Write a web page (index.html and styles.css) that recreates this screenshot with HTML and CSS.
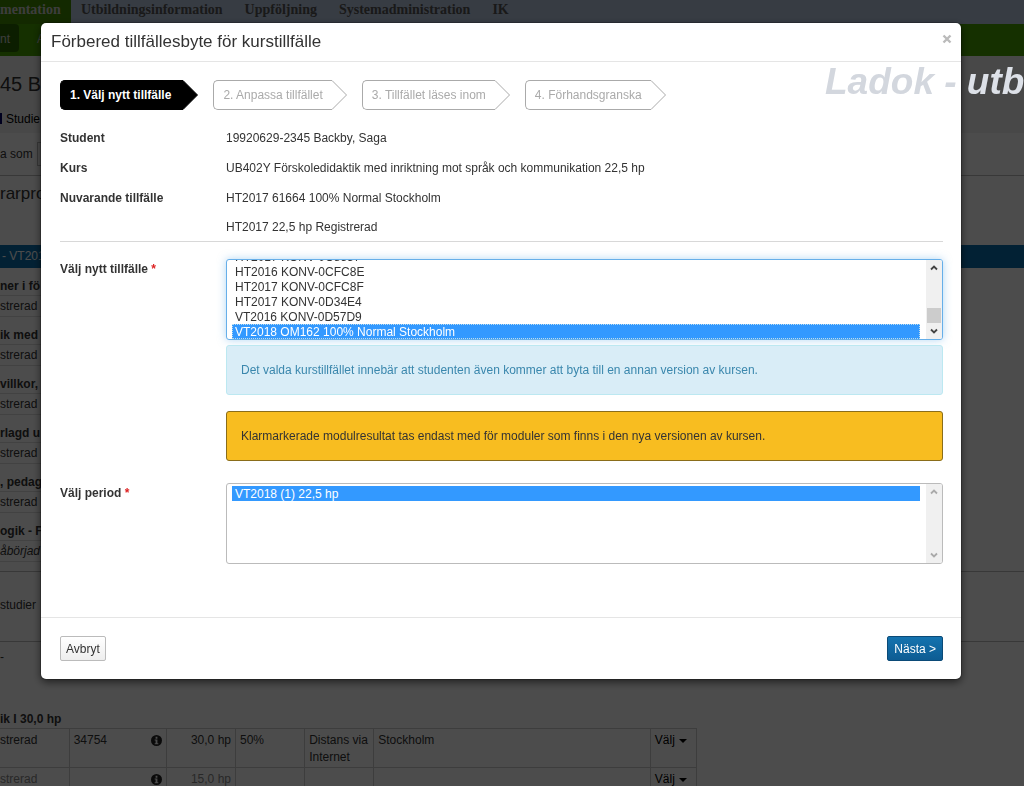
FILE: index.html
```html
<!DOCTYPE html>
<html lang="sv">
<head>
<meta charset="utf-8">
<title>Förbered tillfällesbyte för kurstillfälle</title>
<link rel="stylesheet" href="styles.css">
</head>
<body>
<div class="page">
  <nav class="topnav">
    <a class="active" href="#">mentation</a>
    <a href="#">Utbildningsinformation</a>
    <a href="#">Uppföljning</a>
    <a href="#">Systemadministration</a>
    <a href="#">IK</a>
  </nav>
  <nav class="subnav"><a class="active" href="#">nt</a><a href="#">A</a></nav>
  <div class="head">
    <h1 class="student">45 Ba</h1>
    <div class="tabs"><span class="mark"></span>Studie</div>
  </div>
  <div class="filter"><label for="show">a som</label><select id="show"><option></option></select></div>
  <h2 class="program">rarpro</h2>
  <div class="band">- VT201</div>
  <section class="courses">
    <h3>ner i fö</h3><p>strerad</p>
    <h3>ik med</h3><p>strerad</p>
    <h3>villkor, o</h3><p>strerad</p>
    <h3>rlagd u</h3><p>strerad</p>
    <h3>, pedag</h3><p>strerad</p>
    <h3>ogik - Fö</h3><p><i>åbörjad</i></p>
  </section>
  <div class="studies">studier</div>
  <div class="dash">-</div>
  <h3 class="course-title">ik I 30,0 hp</h3>
  <table class="results">
    <colgroup><col class="c1"><col class="c2"><col class="c3"><col class="c3"><col class="c3"><col class="c4"><col class="c5"></colgroup>
    <tr>
      <td>strerad</td>
      <td><div class="code">34754<svg class="info" viewBox="0 0 12 12"><circle cx="6" cy="6" r="6"/><path d="M5 2h2v2H5zM4 5h3v4h1v1H4V9h1V6H4z"/></svg></div></td>
      <td class="num">30,0 hp</td><td>50%</td><td>Distans via Internet</td><td>Stockholm</td>
      <td><a href="#">Välj <span class="caret"></span></a></td>
    </tr>
    <tr class="muted">
      <td>strerad</td>
      <td><div class="code"><span></span><svg class="info" viewBox="0 0 12 12"><circle cx="6" cy="6" r="6"/><path d="M5 2h2v2H5zM4 5h3v4h1v1H4V9h1V6H4z"/></svg></div></td>
      <td class="num">15,0 hp</td><td></td><td></td><td></td>
      <td><a href="#">Välj <span class="caret"></span></a></td>
    </tr>
  </table>
</div>
<div class="backdrop"></div>

<div class="modal" role="dialog" aria-labelledby="title">
  <header class="modal-header">
    <h2 id="title">Förbered tillfällesbyte för kurstillfälle</h2>
    <button class="close" type="button" aria-label="Stäng"><svg viewBox="0 0 10 10"><path d="M1.5 1.5l7 7M8.5 1.5l-7 7"/></svg></button>
  </header>
  <form class="modal-body">
    <ol class="steps">
      <li class="current"><span>1. Välj nytt tillfälle</span><svg viewBox="0 0 15 30"><path d="M0 .5L14.5 15 0 29.5"/></svg></li>
      <li><span>2. Anpassa tillfället</span><svg viewBox="0 0 15 30"><path d="M0 .5L14.5 15 0 29.5"/></svg></li>
      <li><span>3. Tillfället läses inom</span><svg viewBox="0 0 15 30"><path d="M0 .5L14.5 15 0 29.5"/></svg></li>
      <li><span>4. Förhandsgranska</span><svg viewBox="0 0 15 30"><path d="M0 .5L14.5 15 0 29.5"/></svg></li>
    </ol>
    <dl class="facts">
      <dt>Student</dt><dd>19920629-2345 Backby, Saga</dd>
      <dt>Kurs</dt><dd>UB402Y Förskoledidaktik med inriktning mot språk och kommunikation 22,5 hp</dd>
      <dt>Nuvarande tillfälle</dt><dd>HT2017 61664 100% Normal Stockholm</dd>
      <dd class="second">HT2017 22,5 hp Registrerad</dd>
    </dl>
    <div class="field">
      <label for="occasion">Välj nytt tillfälle <b>*</b></label>
      <div class="stack">
        <div class="listbox focused">
          <select id="occasion" size="5">
            <option>HT2017 KONV-0C8557</option>
            <option>HT2016 KONV-0CFC8E</option>
            <option>HT2017 KONV-0CFC8F</option>
            <option>HT2017 KONV-0D34E4</option>
            <option>VT2016 KONV-0D57D9</option>
            <option selected>VT2018 OM162 100% Normal Stockholm</option>
          </select>
          <div class="bar"><svg viewBox="0 0 8 6"><path d="M1 4.5l3-3 3 3"/></svg><span class="thumb"></span><svg viewBox="0 0 8 6"><path d="M1 1.5l3 3 3-3"/></svg></div>
        </div>
        <p class="note">Det valda kurstillfället innebär att studenten även kommer att byta till en annan version av kursen.</p>
        <p class="note warning">Klarmarkerade modulresultat tas endast med för moduler som finns i den nya versionen av kursen.</p>
      </div>
    </div>
    <div class="field">
      <label for="period">Välj period <b>*</b></label>
      <div class="listbox">
        <select id="period" size="5"><option selected>VT2018 (1) 22,5 hp</option></select>
        <div class="bar"><svg viewBox="0 0 8 6"><path d="M1 4.5l3-3 3 3"/></svg><svg viewBox="0 0 8 6"><path d="M1 1.5l3 3 3-3"/></svg></div>
      </div>
    </div>
  </form>
  <footer class="modal-footer">
    <button class="btn" type="button">Avbryt</button>
    <button class="btn primary" type="button">Nästa &gt;</button>
  </footer>
</div>
<div class="watermark">Ladok - <span>utb</span></div>
<script src="script.js"></script>
</body>
</html>
```
FILE: script.js
```js
const list = document.getElementById('occasion');
list.scrollTop = list.scrollHeight;
```
FILE: styles.css
```css
* { box-sizing: border-box; }
body { margin: 0; height: 100vh; overflow: hidden; font: 12px/18px "Liberation Sans", Arial, sans-serif; color: #333; background: #fff; }
h1, h2, h3, p, dl, dd, ol { margin: 0; padding: 0; }
a { color: inherit; text-decoration: none; }
button, select { font: inherit; color: inherit; }

/* Page behind the dialog */
.page { height: 100vh; overflow: hidden; }
.topnav { display: flex; gap: 22px; height: 24px; background: #b8c8e0; font: bold 14px/20px "Liberation Serif", Georgia, serif; color: #555; }
.topnav a { white-space: nowrap; }
.topnav .active { width: 71px; margin-right: -12px; background: #428a00; color: #ccc; flex: none; }
.subnav { display: flex; gap: 18px; height: 32px; background: #46a000; color: #ccc; line-height: 30px; }
.subnav .active { width: 19px; height: 28px; border-radius: 0 4px 4px 0; background: #2b6600; }
.head { background: #f2f2f2; }
.student { height: 48px; padding-top: 4px; font: 20px/48px "Liberation Sans", Arial, sans-serif; }
.tabs { display: flex; gap: 4px; align-items: center; height: 29px; color: #000; }
.mark { width: 2px; height: 11px; background: #006; }
.filter { display: flex; gap: 4px; align-items: center; height: 43px; border-bottom: 1px solid #bbb; }
.filter select { width: 120px; height: 24px; border: 1px solid #bbb; background: #fff; }
.program { height: 69px; font: 17px/36px "Liberation Sans", Arial, sans-serif; }
.band { height: 23px; padding-left: 2px; line-height: 23px; background: #0870b0; color: #fff; }
.courses { height: 304px; padding-top: 8px; border-bottom: 1px solid #bbb; }
.courses h3 { max-width: 697px; height: 20px; font-size: 12px; line-height: 20px; border-bottom: 1px solid #ddd; }
.courses p { max-width: 697px; height: 21px; margin-bottom: 8px; line-height: 20px; border-bottom: 1px solid #ddd; }
.studies { height: 70px; line-height: 66px; border-bottom: 1px solid #bbb; }
.dash { height: 68px; line-height: 30px; }
.course-title { height: 18px; font-size: 12px; line-height: 18px; }
.results { table-layout: fixed; width: 697px; border-collapse: collapse; line-height: 17px; }
.c1 { width: 69px; } .c2 { width: 97px; } .c3 { width: 69px; } .c4 { width: 276px; } .c5 { width: 46px; }
.results td { padding: 3px 4px 1px; border: 1px solid #ccc; vertical-align: top; }
.results td:first-child { padding-left: 0; border-left: 0; }
.results .num { text-align: right; }
.results a { color: #000; }
.muted { color: #888; }
.code { display: flex; justify-content: space-between; align-items: center; min-height: 17px; }
.info { width: 11px; height: 11px; fill: #222; }
.info path { fill: #fff; }
.caret { display: inline-block; border: 4px solid transparent; border-top-color: #000; border-bottom: 0; vertical-align: 1px; margin-left: 1px; }
.backdrop { position: fixed; inset: 0; background: rgba(0, 0, 0, .7); }

/* Dialog */
.modal { position: fixed; top: 23px; left: 41px; right: 63px; border-radius: 5px; background: #fff; box-shadow: 0 3px 9px rgba(0, 0, 0, .6), 0 0 0 1px rgba(0, 0, 0, .2); }
.modal-header { display: flex; justify-content: space-between; align-items: flex-start; padding: 9px 9px 9px 10px; border-bottom: 1px solid #e5e5e5; }
.modal-header h2 { font-size: 17px; line-height: 20px; font-weight: normal; }
.close { padding: 0; border: 0; background: none; width: 10px; height: 14px; display: flex; align-items: center; }
.close svg { width: 10px; height: 10px; fill: none; stroke: #bbb; stroke-width: 2.4; }
.modal-body { padding: 18px 18px 53px 19px; }
.steps { display: flex; gap: 15px; list-style: none; color: #aaa; }
.steps li { display: flex; }
.steps span { height: 30px; padding: 0 9px; line-height: 28px; border: 1px solid #aaa; border-right: 0; border-radius: 5px 0 0 5px; white-space: nowrap; }
.steps svg { width: 15px; height: 30px; fill: #fff; stroke: #aaa; }
.steps .current { color: #fff; font-weight: bold; }
.steps .current span { padding-right: 12px; background: #000; border-color: #000; }
.steps .current svg { fill: #000; stroke: #000; }
.facts { display: grid; grid-template-columns: 166px 1fr; padding-top: 13px; margin-bottom: 17px; border-bottom: 1px solid #d8d8d8; line-height: 30px; }
.facts dt { font-weight: bold; }
.facts .second { grid-column: 2; line-height: 28px; }
.field { display: grid; grid-template-columns: 166px 1fr; margin-top: 22px; }
.facts + .field { margin-top: 0; }
.field label { font-weight: bold; line-height: 20px; }
.field label b { color: #d22; }
.listbox { display: flex; height: 81px; border: 1px solid #bbb; border-radius: 3px; background: #fff; overflow: hidden; }
.focused { border-color: #66afe9; box-shadow: 0 0 8px rgba(102, 175, 233, .5); }
.listbox select { flex: 1; height: 79px; padding: 2px 6px 0 5px; border: 0; outline: 0; background: none; scrollbar-width: none; overflow-y: scroll; }
.listbox option { height: 15px; min-height: 15px; padding: 1px 3px 0; line-height: 15px; overflow: visible; }
.listbox option:checked { background: linear-gradient(#39f, #39f); -webkit-text-fill-color: #fff; }
.focused option:checked { outline: 1px dotted #bde; outline-offset: -1px; }
.bar { display: flex; flex-direction: column; align-items: center; width: 16px; padding: 5px 0; background: #f0f0f0; }
.bar svg { width: 8px; height: 6px; fill: none; stroke: #aaa; stroke-width: 1.8; }
.bar svg:last-child { margin-top: auto; }
.focused .bar svg { stroke: #444; }
.thumb { width: 14px; height: 15px; margin-top: 37px; background: #ccc; }
.note { margin-top: 5px; padding: 15px 14px; border: 1px solid #bce8f1; border-radius: 3px; background: #d9edf7; color: #3a87ad; }
.warning { margin-top: 16px; border-color: #8a6d1a; background: #f8bd20; color: #333; }
.modal-footer { display: flex; justify-content: space-between; padding: 18px 18px 18px 19px; border-top: 1px solid #e5e5e5; }
.btn { height: 25px; padding: 0 5px; border: 1px solid #bbb; border-radius: 2px; background: linear-gradient(#fff, #eee); }
.primary { padding: 0 6px; border-color: #0b4a77; background: linear-gradient(#1473af, #0d5c93); color: #fff; }
.watermark { position: absolute; top: 61px; left: 825px; font: italic bold 37px/42px "Liberation Sans", Arial, sans-serif; color: #d3d7de; white-space: nowrap; }
.watermark span { color: #dde1e8; }
```
